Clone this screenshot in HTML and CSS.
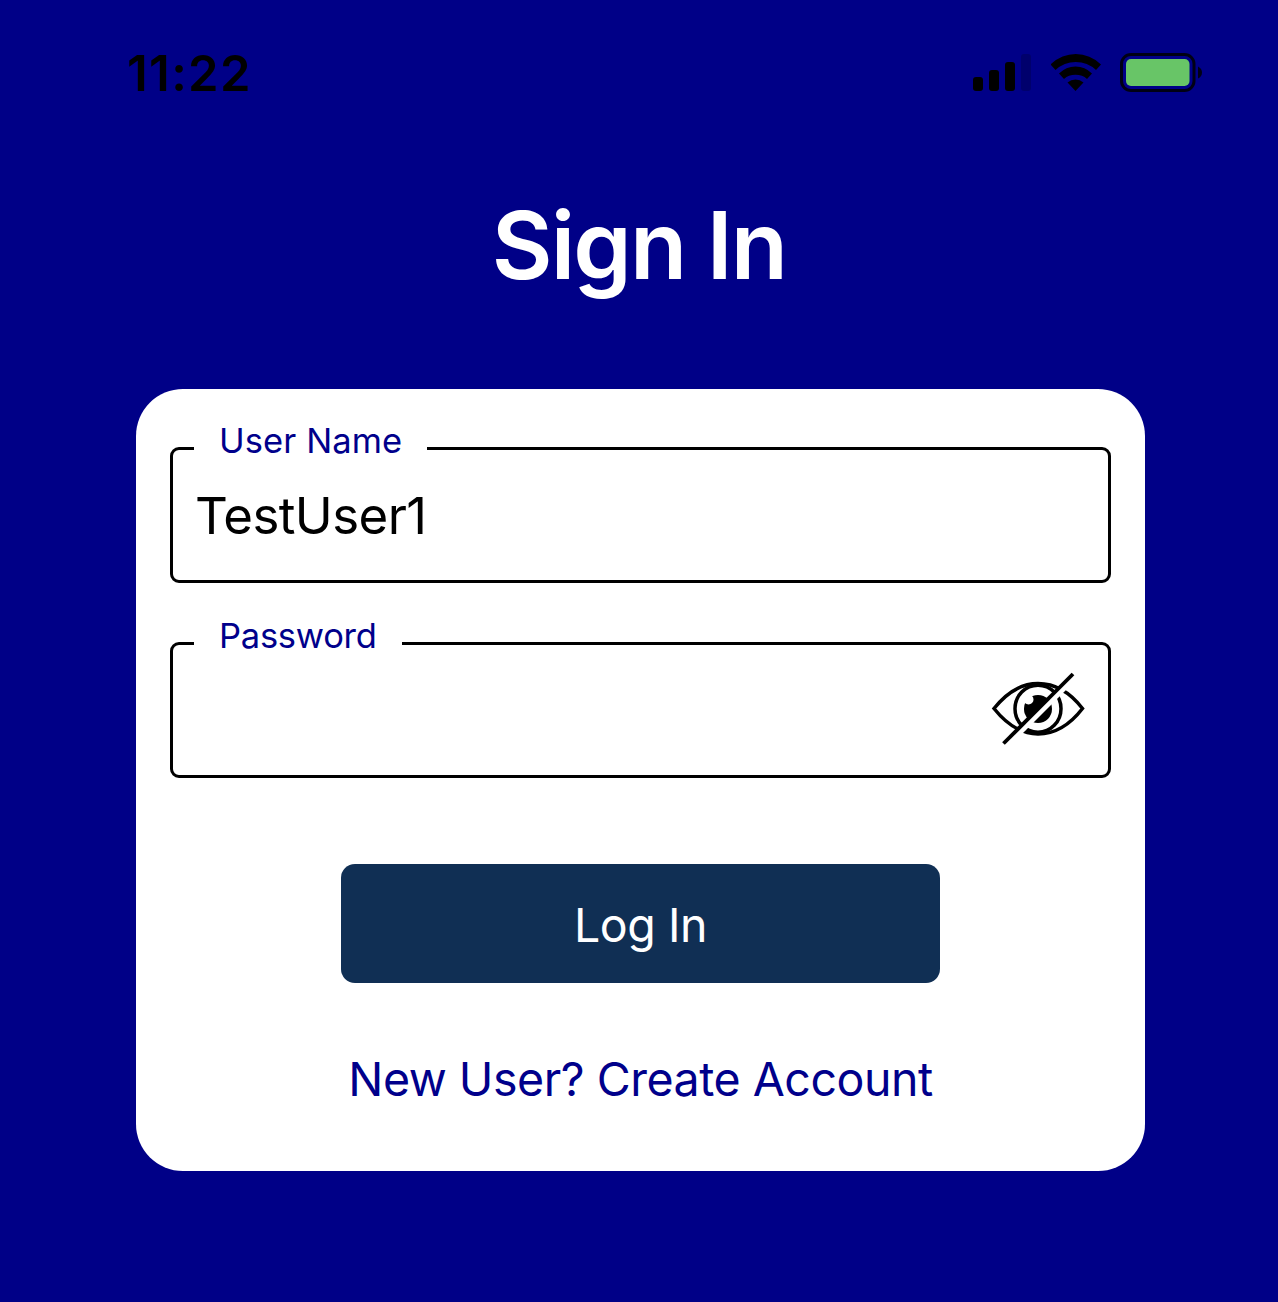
FILE: index.html
```html
<!DOCTYPE html>
<html lang="en">
<head>
<meta charset="utf-8">
<title>Sign In</title>
<link rel="stylesheet" href="styles.css">
</head>
<body>
<header class="status-bar">
  <time class="clock">11:22</time>
  <div class="indicators">
    <svg class="signal" width="60" height="40" viewBox="972 53 60 40" aria-hidden="true">
      <rect x="973" y="77" width="10" height="14" rx="3"/>
      <rect x="989" y="70" width="10" height="21" rx="3"/>
      <rect x="1005" y="62" width="10" height="29" rx="3"/>
      <rect x="1021" y="54" width="10" height="37" rx="3" opacity=".2"/>
    </svg>
    <svg class="wifi" width="50" height="40" viewBox="1051 53 50 40" aria-hidden="true">
      <path d="M1050.500 64.500Q1061.500 54 1075.800 54T1101 64.500L1096 70Q1087.500 62 1075.800 62T1055.500 70Z"/>
      <path d="M1059 73.500Q1066 66.500 1075.500 66.500T1092 73.500L1087 79Q1082.500 74.800 1075.500 74.800T1064 79Z"/>
      <path d="M1067.500 82.500Q1071 79.500 1075.500 79.500T1083.500 82.500L1075.500 91Z"/>
    </svg>
    <svg class="battery" width="82" height="40" viewBox="1120 53 82 40" aria-hidden="true">
      <rect x="1121.500" y="54.500" width="72.500" height="36" rx="9.500" fill="none" stroke="#000" stroke-opacity=".85" stroke-width="3"/>
      <rect x="1126" y="59" width="63.500" height="27" rx="5" fill="#68c567"/>
      <path d="M1198 66.500Q1202 68.500 1202 72.500T1198 78.500Z" fill-opacity=".85"/>
    </svg>
  </div>
</header>
<main class="screen">
  <h1 class="title">Sign In</h1>
  <form class="card">
    <div class="field">
      <label class="field-label" for="user">User Name</label>
      <input class="field-input" id="user" type="text" value="TestUser1">
    </div>
    <div class="field">
      <label class="field-label field-label-password" for="password">Password</label>
      <input class="field-input" id="password" type="password">
      <svg class="eye" width="94" height="74" viewBox="991 672 94 74" aria-hidden="true">
        <g fill="none" stroke="#000" stroke-width="3.500">
          <path d="M994 708.500C1008 691 1023 683.500 1038 683.500S1069 691 1082.500 708.500C1069 726 1053 734 1038 734S1008 726 994 708.500Z"/>
          <ellipse cx="1038" cy="708.700" rx="23" ry="23.500"/>
        </g>
        <circle cx="1038" cy="709" r="14"/>
        <circle cx="1028.500" cy="699.500" r="5" fill="#fff"/>
        <path d="M1005 746.500L1075 676.500" stroke="#fff" stroke-width="6.400"/>
        <path d="M1003.500 743.500L1073 674" stroke="#000" stroke-width="3.800"/>
      </svg>
    </div>
    <button class="login" type="button">Log In</button>
    <a class="create" href="#">New User? Create Account</a>
  </form>
</main>
</body>
</html>
```
FILE: styles.css
```css
* { box-sizing: border-box; }
body {
  margin: 0;
  min-height: 1302px;
  background: #000087;
  font-family: Inter, sans-serif;
}
.status-bar {
  display: flex;
  justify-content: space-between;
  align-items: center;
  height: 146px;
  padding: 0 76px 0 127px;
}
.clock {
  padding-top: 2px;
  font-size: 49px;
  font-weight: 600;
  line-height: 60px;
  letter-spacing: 1.35px;
}
.indicators { display: flex; }
.wifi { margin-left: 19px; }
.battery { margin-left: 19px; }
.screen { display: flex; flex-direction: column; align-items: center; }
.title {
  margin: 39px 0 83px;
  color: #fff;
  font-size: 93.5px;
  font-weight: 600;
  line-height: 121px;
  letter-spacing: -1.9px;
}
.card {
  display: flex;
  flex-direction: column;
  align-items: center;
  width: 1009px;
  height: 782px;
  margin-left: 3px;
  padding: 58px 34px 0;
  border-radius: 47px;
  background: #fff;
}
.field {
  position: relative;
  display: flex;
  align-items: center;
  width: 941px;
  height: 136px;
  margin-bottom: 59px;
  padding: 0 23px 2px 22px;
  border: 3px solid #000;
  border-radius: 9px;
}
.field-label {
  position: absolute;
  top: -30px;
  left: 21px;
  padding: 0 25px;
  background: #fff;
  color: #00008b;
  font-size: 34.5px;
  line-height: 42px;
  letter-spacing: .1px;
}
.field-label-password { letter-spacing: -.25px; }
.field-input {
  flex: 1;
  min-width: 0;
  padding: 4px 0 0;
  border: 0;
  outline: 0;
  background: none;
  color: #000;
  font: 51px/62px Inter, sans-serif;
  letter-spacing: -.6px;
}
.login {
  width: 599px;
  height: 119px;
  margin-top: 27px;
  padding: 2px 0 0;
  border: 0;
  border-radius: 14px;
  background: #102f54;
  color: #fff;
  font: 46.5px/56px Inter, sans-serif;
  letter-spacing: -.45px;
}
.create {
  margin-top: 68px;
  color: #00008b;
  font-size: 46.5px;
  line-height: 56px;
  letter-spacing: -.47px;
  text-decoration: none;
}
```
